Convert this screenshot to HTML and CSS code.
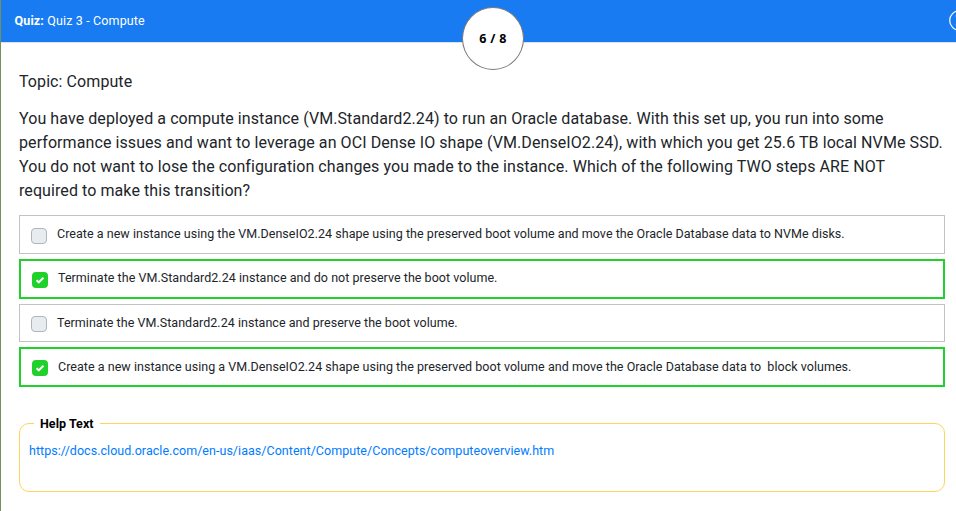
FILE: index.html
```html
<!DOCTYPE html>
<html lang="en"><head><meta charset="utf-8"><title>Quiz 3 - Compute</title><link rel="stylesheet" href="styles.css"></head>
<body>
<header class="bar"><div class="title"><b>Quiz:</b> Quiz 3 - Compute</div><div class="count">6 / 8</div><div class="timer"><svg viewBox="0 0 21 21"><circle cx="10.5" cy="10.5" r="9.8"/><path d="M6.5 6h1M6.5 15h1"/></svg></div></header>
<main>
<p class="topic">Topic: Compute</p>
<p class="question">You have deployed a compute instance (VM.Standard2.24) to run an Oracle database. With this set up, you run into some<br>performance issues and want to leverage an OCI Dense IO shape (VM.DenseIO2.24), with which you get 25.6 TB local NVMe SSD.<br>You do not want to lose the configuration changes you made to the instance. Which of the following TWO steps ARE NOT<br>required to make this transition?</p>
<div class="options">
<div class="option"><span class="box"></span><span class="label">Create a new instance using the VM.DenseIO2.24 shape using the preserved boot volume and move the Oracle Database data to NVMe disks.</span></div>
<div class="option on"><span class="box"><svg viewBox="0 0 16 16"><path d="M4.6 8.2l2.2 2.2 4.6-4.6"/></svg></span><span class="label">Terminate the VM.Standard2.24 instance and do not preserve the boot volume.</span></div>
<div class="option short"><span class="box"></span><span class="label">Terminate the VM.Standard2.24 instance and preserve the boot volume.</span></div>
<div class="option on last"><span class="box"><svg viewBox="0 0 16 16"><path d="M4.6 8.2l2.2 2.2 4.6-4.6"/></svg></span><span class="label">Create a new instance using a VM.DenseIO2.24 shape using the preserved boot volume and move the Oracle Database data to&nbsp; block volumes.</span></div>
</div>
<fieldset class="help"><legend>Help Text</legend><a href="#">https://docs.cloud.oracle.com/en-us/iaas/Content/Compute/Concepts/computeoverview.htm</a></fieldset>
</main>
</body></html>
```
FILE: styles.css
```css
*{box-sizing:border-box}
body{margin:0;height:511px;overflow:hidden;background:#fff;color:#212529;font-family:Roboto,sans-serif;border-left:1px solid #75905f}
.bar{height:43px;border-bottom:1px solid #dee2e6;background:#187bf2;color:#fff;position:relative;padding:0 13.5px;font-size:12.5px;letter-spacing:.14px;line-height:41px}
.count{position:absolute;left:461px;top:7px;width:62px;height:63px;border:1px solid #777;border-radius:50%;background:#fff;color:#000;text-align:center;font:700 12.5px/61px "Open Sans",sans-serif;letter-spacing:.3px}
.timer{position:absolute;left:948px;top:10px;width:21px;height:21px}
.timer svg{display:block;width:21px;height:21px;fill:none;stroke:#fff;stroke-width:1.2}
.timer path{stroke-opacity:.5}
main{padding:27px 11px 0 18px}
.topic,.question{margin:0 0 13px;font-size:16px;letter-spacing:.082px;line-height:24px;white-space:nowrap}
.question{margin-bottom:12px}
.options{display:flex;flex-direction:column;gap:5px}
.option{height:39px;border:1px solid #c3c3c3;padding-left:11px;display:flex;align-items:center;font-size:12.5px;letter-spacing:.038px;white-space:nowrap}
.option.short{height:38px}
.option.on{height:40px;border:2px solid #21d12b}
.label{line-height:16px;padding-bottom:2px}
.box{width:16px;height:16px;border:1px solid #adb5bd;border-radius:4px;background:#e9ecef;margin:3px 10px 0 0}
.short .box{margin-top:2px}
.short .label,.last .label{padding-bottom:0}
.on .box{border:0;background:#21d12b;margin-top:1px}
.box svg{display:block;width:16px;height:16px;fill:none;stroke:#fff;stroke-width:2}
.help{height:76px;margin:29px 0 0;padding:11px 9px;border:1px solid #ffd45c;border-radius:10px;font-size:12.5px;letter-spacing:.04px}
.help legend{font-weight:700;color:#000;font-size:12.5px;height:15px;line-height:16px;padding:0 6px;margin-left:5px}
.help a{display:block;color:#007bff;text-decoration:none;line-height:18px}
```
